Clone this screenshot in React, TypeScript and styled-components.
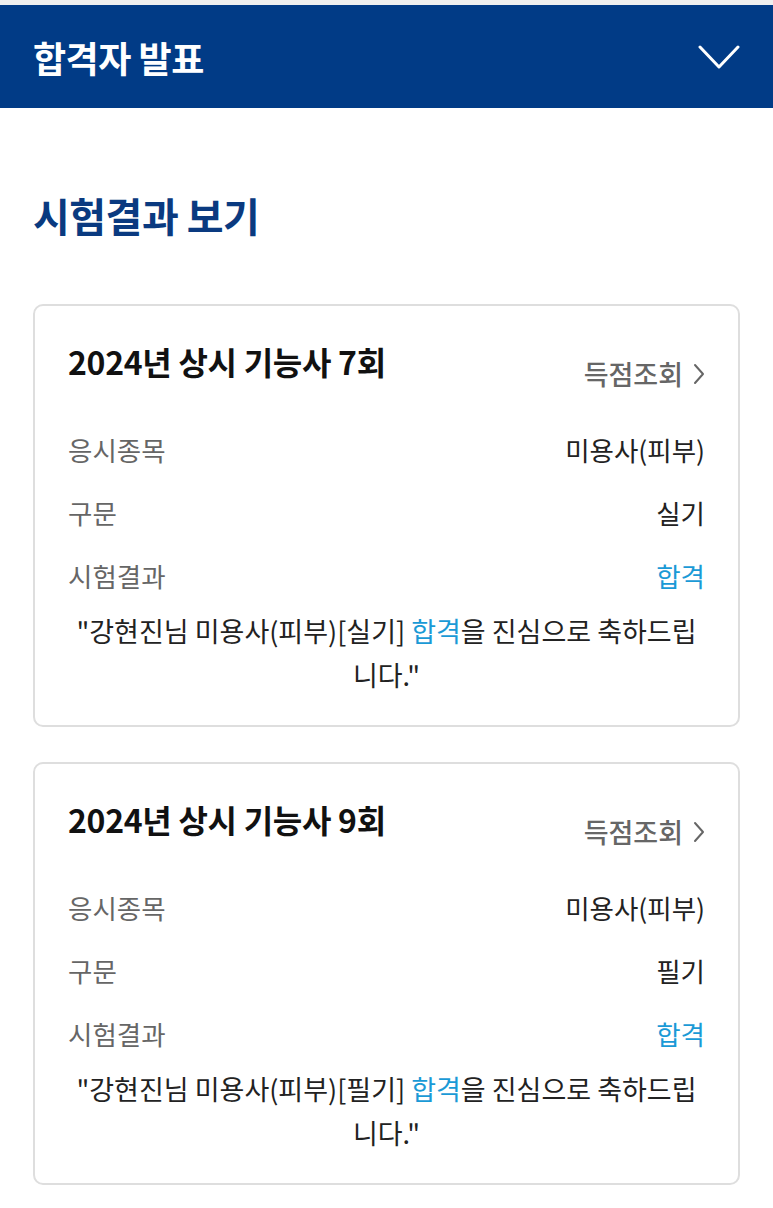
import styled, { createGlobalStyle } from "styled-components";

type ExamResult = {
    title: string;
    subject: string;
    division: string;
    result: string;
    name: string;
}

const results: ExamResult[] = [
    { title: "2024년 상시 기능사 7회", subject: "미용사(피부)", division: "실기", result: "합격", name: "강현진" },
    { title: "2024년 상시 기능사 9회", subject: "미용사(피부)", division: "필기", result: "합격", name: "강현진" },
];

const ChevronDown = () => (
    <svg width="42" height="26" viewBox="0 0 42 26" fill="none">
        <polyline points="2,3 21,23 40,3" stroke="#fff" strokeWidth="3" strokeLinecap="round" strokeLinejoin="round" />
    </svg>
);

const ChevronRight = () => (
    <svg width="12" height="22" viewBox="0 0 12 22" fill="none">
        <polyline points="2,2 10,11 2,20" stroke="#666" strokeWidth="2" strokeLinecap="round" strokeLinejoin="round" />
    </svg>
);

const ResultCard = ({ item }: { item: ExamResult }) => {
    return (
        <StyledCard>
            <CardHeader>
                <CardTitle>{item.title}</CardTitle>
                <ScoreLink type="button">
                    득점조회
                    <ChevronRight />
                </ScoreLink>
            </CardHeader>
            <InfoList>
                <InfoRow>
                    <dt>응시종목</dt>
                    <dd>{item.subject}</dd>
                </InfoRow>
                <InfoRow>
                    <dt>구문</dt>
                    <dd>{item.division}</dd>
                </InfoRow>
                <InfoRow $highlight>
                    <dt>시험결과</dt>
                    <dd>{item.result}</dd>
                </InfoRow>
            </InfoList>
            <Message>
                "{item.name}님 {item.subject}[{item.division}] <Pass>{item.result}</Pass>을 진심으로 축하드립니다."
            </Message>
        </StyledCard>
    );
};

const App = () => {
    return (
        <>
            <GlobalStyle />
            <Page>
                <TopBar>
                    <h1>합격자 발표</h1>
                    <button type="button" aria-label="메뉴 열기">
                        <ChevronDown />
                    </button>
                </TopBar>
                <Content>
                    <SectionTitle>시험결과 보기</SectionTitle>
                    <CardList>
                        {results.map((item) => (
                            <ResultCard key={item.title} item={item} />
                        ))}
                    </CardList>
                </Content>
            </Page>
        </>
    );
};

const GlobalStyle = createGlobalStyle`
    * {
        box-sizing: border-box;
    }

    body {
        margin: 0;
        background: #fff;
        font-family: "Noto Sans CJK KR", "Noto Sans", sans-serif;
        color: #222;
    }
`;

const Page = styled.div`
    padding-top: 5px;
    background: #efefef;
    min-height: 1208px;
`;

const TopBar = styled.header`
    display: flex;
    justify-content: space-between;
    align-items: center;
    height: 103px;
    padding: 0 33px;
    background: #013b86;

    h1 {
        margin: 0;
        color: #fff;
        font-size: 36px;
        font-weight: 700;
        letter-spacing: -0.5px;
    }

    button {
        display: flex;
        padding: 0;
        border: none;
        background: none;
    }
`;

const Content = styled.main`
    padding: 80px 33px 40px;
    min-height: 1100px;
    background: #fff;
`;

const SectionTitle = styled.h2`
    margin: 0 0 62px;
    color: #0a3a80;
    font-size: 40px;
    font-weight: 700;
    line-height: 54px;
    letter-spacing: -0.5px;
`;

const CardList = styled.div`
    display: flex;
    flex-direction: column;
    gap: 35px;
`;

const StyledCard = styled.section`
    padding: 35px 33px 28px;
    border: 2px solid #dedede;
    border-radius: 10px;
`;

const CardHeader = styled.div`
    display: flex;
    justify-content: space-between;
    align-items: flex-start;
`;

const CardTitle = styled.h3`
    margin: 0;
    font-size: 32px;
    font-weight: 700;
    line-height: 40px;
    color: #111;
    letter-spacing: -0.3px;
`;

const ScoreLink = styled.button`
    display: flex;
    align-items: center;
    gap: 10px;
    margin-top: 15px;
    padding: 0;
    border: none;
    background: none;
    font-family: inherit;
    font-size: 27px;
    line-height: 36px;
    font-weight: 500;
    color: #666;
`;

const InfoList = styled.dl`
    display: flex;
    flex-direction: column;
    gap: 27px;
    margin: 40px 0 0;
`;

const InfoRow = styled.div<{ $highlight?: boolean }>`
    display: flex;
    justify-content: space-between;
    font-size: 26.5px;
    line-height: 36px;

    dt {
        color: #666;
    }

    dd {
        margin: 0;
        color: ${({ $highlight }) => ($highlight ? "#1a9ad6" : "#222")};
    }
`;

const Message = styled.p`
    margin: 15px 0 0;
    text-align: center;
    font-size: 27px;
    line-height: 44px;
    color: #222;
`;

const Pass = styled.span`
    color: #1a9ad6;
`;

export default App;
